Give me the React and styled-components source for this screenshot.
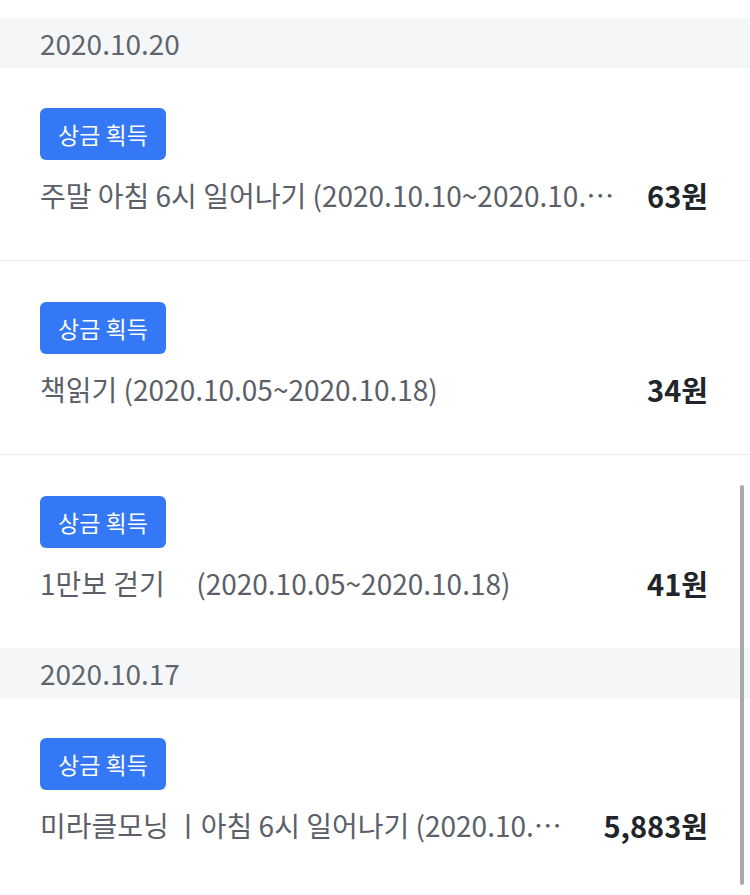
import React from 'react';
import styled, { createGlobalStyle } from 'styled-components';

const GlobalStyle = createGlobalStyle`
    html, body {
        margin: 0;
        padding: 0;
        background: #ffffff;
    }
    body {
        font-family: "Noto Sans CJK KR", "Noto Sans", sans-serif;
        -webkit-font-smoothing: antialiased;
    }
`

const StyledPage = styled.div`
    position: relative;
    width: 750px;
    height: 895px;
    overflow: hidden;
    padding-top: 18px;
    box-sizing: border-box;
    background: #ffffff;
`

const DateHeader = styled.div`
    height: 50px;
    display: flex;
    align-items: center;
    padding-left: 40px;
    background: #f5f6f8;
    color: #60656c;
    font-size: 28px;
`

const Item = styled.div`
    height: 192px;
    padding: 40px 42px 0 40px;
    box-sizing: border-box;
    & + & {
        border-top: 1px solid #e9e9ee;
        height: 194px;
        padding-top: 41px;
    }
`

const Badge = styled.span`
    display: inline-flex;
    align-items: center;
    justify-content: center;
    height: 52px;
    padding: 0 18px;
    box-sizing: border-box;
    border-radius: 6px;
    background: #3478f6;
    color: #ffffff;
    font-size: 23px;
`

const Row = styled.div`
    display: flex;
    align-items: center;
    margin-top: 16px;
    height: 38px;
`

const Title = styled.div`
    flex: 1;
    min-width: 0;
    margin-right: 32px;
    color: #5b6068;
    font-size: 28px;
    line-height: 38px;
    white-space: pre;
    overflow: hidden;
    text-overflow: ellipsis;
`

const Amount = styled.div`
    flex-shrink: 0;
    color: #212428;
    font-size: 29px;
    line-height: 38px;
    font-weight: bold;
`

const ScrollThumb = styled.div`
    position: absolute;
    right: 6px;
    top: 485px;
    width: 4px;
    height: 400px;
    border-radius: 2px;
    background: #a9a9a9;
`

const groups = [
    {
        date: '2020.10.20',
        items: [
            { title: '주말 아침 6시 일어나기 (2020.10.10~2020.10.18)', amount: '63원' },
            { title: '책읽기 (2020.10.05~2020.10.18)', amount: '34원' },
            { title: '1만보 걷기     (2020.10.05~2020.10.18)', amount: '41원' },
        ],
    },
    {
        date: '2020.10.17',
        items: [
            { title: '미라클모닝 ㅣ아침 6시 일어나기 (2020.10.10~2020.10.18)', amount: '5,883원' },
        ],
    },
];

const App = () => (
    <StyledPage>
        <GlobalStyle />
        {groups.map(group => (
            <div key={group.date}>
                <DateHeader>{group.date}</DateHeader>
                {group.items.map((item, i) => (
                    <Item key={i}>
                        <Badge>상금 획득</Badge>
                        <Row>
                            <Title>{item.title}</Title>
                            <Amount>{item.amount}</Amount>
                        </Row>
                    </Item>
                ))}
            </div>
        ))}
        <ScrollThumb />
    </StyledPage>
);

export default App;
